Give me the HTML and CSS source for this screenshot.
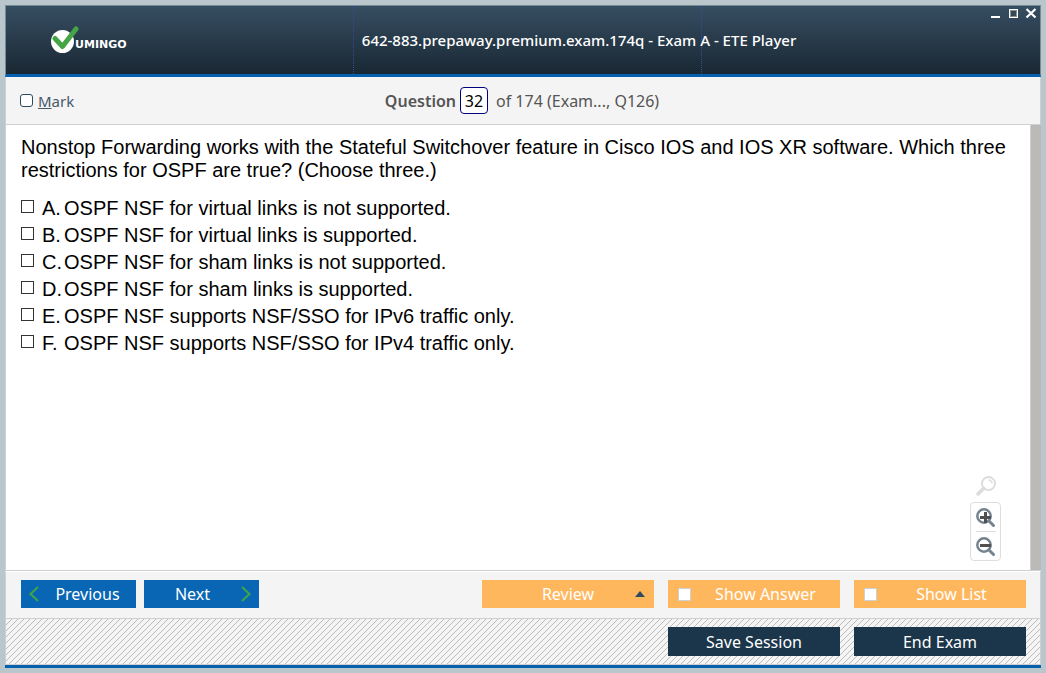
FILE: index.html
```html
<!DOCTYPE html>
<html lang="en">
<head>
<meta charset="utf-8">
<meta name="viewport" content="width=device-width, initial-scale=1">
<title>642-883.prepaway.premium.exam.174q - Exam A - ETE Player</title>
<link rel="stylesheet" href="styles.css">
</head>
<body>
<div class="window">
  <header class="titlebar">
    <div class="brand">
      <svg class="brand-mark" width="28" height="28" viewBox="0 0 28 28" aria-hidden="true">
        <circle cx="11.5" cy="15.5" r="11.5" fill="#fff"/>
        <path d="M4 12.500 L11.500 20.500 L25 3" fill="none" stroke="#45a445" stroke-width="5" stroke-linecap="round" stroke-linejoin="round"/>
      </svg>
      <span class="brand-name">UMINGO</span>
    </div>
    <h1 class="title">642-883.prepaway.premium.exam.174q - Exam A - ETE Player</h1>
    <div class="window-controls">
      <button class="window-button" type="button" aria-label="Minimize"><svg width="12" height="12" viewBox="0 0 12 12"><path d="M2 9h9v2H2z" fill="#fff"/></svg></button>
      <button class="window-button" type="button" aria-label="Maximize"><svg width="12" height="12" viewBox="0 0 12 12"><rect x="2.500" y="2.500" width="8" height="8" fill="none" stroke="#fff"/><rect x="3.500" y="3.500" width="6" height="6" fill="none" stroke="#8f8f88"/></svg></button>
      <button class="window-button" type="button" aria-label="Close"><svg width="12" height="12" viewBox="0 0 12 12"><path d="M1.500 2 L10.500 10.500 M10.500 2 L1.500 10.500" stroke="#fff" stroke-width="2.200"/></svg></button>
    </div>
  </header>

  <div class="question-bar">
    <label class="mark"><input class="mark-box" type="checkbox"><span><u>M</u>ark</span></label>
    <div class="position">
      <label class="position-label" for="question-number">Question</label>
      <input class="position-input" id="question-number" type="text" value="32">
      <span class="position-total">of 174 (Exam..., Q126)</span>
    </div>
  </div>

  <main class="content">
    <div class="question">
      <p class="question-text">Nonstop Forwarding works with the Stateful Switchover feature in Cisco IOS and IOS XR software. Which three restrictions for OSPF are true? (Choose three.)</p>
      <div class="answers">
        <label class="answer"><input class="answer-box" type="checkbox"><span class="letter">A.</span><span>OSPF NSF for virtual links is not supported.</span></label>
        <label class="answer"><input class="answer-box" type="checkbox"><span class="letter">B.</span><span>OSPF NSF for virtual links is supported.</span></label>
        <label class="answer"><input class="answer-box" type="checkbox"><span class="letter">C.</span><span>OSPF NSF for sham links is not supported.</span></label>
        <label class="answer"><input class="answer-box" type="checkbox"><span class="letter">D.</span><span>OSPF NSF for sham links is supported.</span></label>
        <label class="answer"><input class="answer-box" type="checkbox"><span class="letter">E.</span><span>OSPF NSF supports NSF/SSO for IPv6 traffic only.</span></label>
        <label class="answer"><input class="answer-box" type="checkbox"><span class="letter">F.</span><span>OSPF NSF supports NSF/SSO for IPv4 traffic only.</span></label>
      </div>
    </div>
    <div class="zoom">
      <svg width="20" height="20" viewBox="0 0 20 20" fill="none" aria-hidden="true"><circle cx="12.500" cy="7.500" r="6.500" stroke="#dcdcdc" stroke-width="2"/><path d="M12.500 4a3.500 3.500 0 0 1 3.500 3.500" stroke="#dcdcdc" stroke-width="1.500"/><path d="M7.500 12.500 L2 18" stroke="#dcdcdc" stroke-width="3.500" stroke-linecap="round"/></svg>
      <div class="zoom-panel">
        <button class="zoom-button" type="button" aria-label="Zoom in"><svg width="20" height="20" viewBox="0 0 20 20" fill="none"><circle cx="8" cy="8" r="6.700" stroke="#75838f" stroke-width="2.500"/><path d="M13 13 L17.500 17.500" stroke="#75838f" stroke-width="3" stroke-linecap="round"/><path d="M4 9.500h11M9.500 4v11" stroke="#505050" stroke-width="3"/></svg></button>
        <button class="zoom-button" type="button" aria-label="Zoom out"><svg width="20" height="20" viewBox="0 0 20 20" fill="none"><circle cx="8" cy="8" r="6.700" stroke="#75838f" stroke-width="2.500"/><path d="M13 13 L17.500 17.500" stroke="#75838f" stroke-width="3" stroke-linecap="round"/><path d="M4 8.500h11" stroke="#505050" stroke-width="3"/></svg></button>
      </div>
    </div>
    <div class="scroll-track"></div>
  </main>

  <div class="actions">
    <button class="button nav" type="button"><svg width="10" height="16" viewBox="0 0 10 16"><path d="M9 1 L1.500 8 L9 15" fill="none" stroke="#3fa34a" stroke-width="2.200"/></svg><span class="grow">Previous</span></button>
    <button class="button nav" type="button"><span class="grow">Next</span><svg width="10" height="16" viewBox="0 0 10 16"><path d="M1 1 L8.500 8 L1 15" fill="none" stroke="#3fa34a" stroke-width="2.200"/></svg></button>
    <span class="spacer"></span>
    <button class="button option review" type="button"><span class="grow">Review</span><svg class="caret" width="10" height="6" viewBox="0 0 10 6"><path d="M0 6 L5 0 L10 6z" fill="#2f4a5f"/></svg></button>
    <label class="button option"><input class="option-box" type="checkbox"><span class="grow">Show Answer</span></label>
    <label class="button option"><input class="option-box" type="checkbox"><span class="grow">Show List</span></label>
  </div>

  <footer class="session">
    <button class="button dark" type="button">Save Session</button>
    <button class="button dark" type="button">End Exam</button>
  </footer>
</div>
</body>
</html>
```
FILE: styles.css
```css
* { box-sizing: border-box; }

body {
  margin: 0;
  padding: 5px;
  min-height: 100vh;
  display: flex;
  background: #b9c6cc;
  font-family: "Noto Sans", "Open Sans", sans-serif;
}

button, input { font: inherit; margin: 0; padding: 0; }
input[type="checkbox"] { appearance: none; flex: none; background: #fff; }
svg { display: block; flex: none; }

.window {
  flex: 1;
  min-width: 0;
  display: flex;
  flex-direction: column;
  background: #fff;
  border-bottom: 3px solid #0560b0;
}

.titlebar {
  display: grid;
  grid-template-columns: 37fr minmax(0, 37fr) 36fr;
  height: 72px;
  border: 1px solid #788b93;
  border-bottom: 3px solid #0560b0;
  background: linear-gradient(#364e62, #1a2733);
  color: #fff;
}

.brand {
  display: flex;
  align-items: center;
  padding-left: 45px;
  border-right: 1px dotted #34499a;
}
.brand-name {
  margin-left: -4px;
  padding-top: 10px;
  font: bold 11px/12px "DejaVu Sans", sans-serif;
}

.title {
  margin: 0;
  padding-left: 8px;
  border-right: 1px dotted #34499a;
  font-size: 15px;
  font-weight: 500;
  line-height: 68px;
  white-space: nowrap;
}

.window-controls {
  display: flex;
  align-self: start;
  justify-content: flex-end;
  gap: 6px;
  padding: 1px 3px 0 0;
}
.window-button { border: 0; background: none; }

.question-bar {
  display: grid;
  grid-template-columns: 1fr auto 1fr;
  align-items: center;
  height: 48px;
  padding: 0 16px 0 14px;
  border: 1px solid #cfcfcf;
  border-top: 0;
  background: #f4f4f4;
  color: #555;
  font-size: 16px;
}
.mark { display: flex; align-items: center; gap: 5px; color: #44596a; font-size: 15px; }
.mark-box { width: 13px; height: 13px; border: 1px solid #2f4a5f; border-radius: 3px; }
.position { display: flex; align-items: center; gap: 4px; }
.position-label { font-weight: 600; }
.position-input {
  width: 28px;
  height: 27px;
  border: 1px solid #000080;
  border-radius: 4px;
  background: #fff;
  color: #000;
  text-align: center;
}
.position-total { padding-left: 4px; }

.content {
  flex: 1;
  display: flex;
  border-bottom: 1px solid #cfcfcf;
  border-left: 1px solid #cfcfcf;
  position: relative;
  color: #000;
  font: 20px/23px "Liberation Sans", Arial, sans-serif;
}
.question { flex: 1; padding: 11px 20px 20px 15px; }
.question-text { margin: 0; }
.answers { margin-top: 13px; }
.answer { display: flex; align-items: center; height: 27px; }
.answer-box { width: 13px; height: 13px; margin-bottom: 4px; border: 1px solid #333; }
.letter { flex: none; width: 22px; margin-left: 8px; }

.zoom {
  position: absolute;
  right: 40px;
  bottom: 9px;
  display: flex;
  flex-direction: column;
  align-items: center;
  gap: 6px;
}
.zoom-panel {
  padding: 0 4px 0 5px;
  border: 1px solid #dedede;
  border-radius: 4px;
  background: #fff;
}
.zoom-button { display: block; padding: 5px 0 3px; border: 0; background: none; }
.zoom-button + .zoom-button { border-top: 1px solid #dedede; }
.scroll-track { width: 11px; border-left: 1px solid #cfcfcf; background: #bcbab6; }

.actions {
  display: flex;
  align-items: center;
  gap: 8px;
  height: 48px;
  padding: 0 14px 2px 15px;
  border: 1px solid #cfcfcf;
  border-top: 1px solid #fff;
  background: #f4f4f4;
}
.spacer { flex: 1; }
.button {
  display: flex;
  align-items: center;
  justify-content: center;
  height: 28px;
  border: 0;
  color: #fff;
  font: 16px/20px "Noto Sans", "Open Sans", sans-serif;
}
.grow { flex: 1; text-align: center; }
.nav { gap: 8px; width: 115px; padding: 0 8px; background: #0866b5; }
.option { gap: 10px; width: 172px; padding: 0 10px; background: #ffb75e; }
.review { padding: 0 9px 0 29px; }
.option + .option { margin-left: 6px; }
.option-box { width: 13px; height: 13px; border: 1px solid #d0d0d0; }

.session {
  display: flex;
  justify-content: flex-end;
  align-items: center;
  gap: 14px;
  height: 46px;
  padding: 0 14px;
  border: 1px solid #cfcfcf;
  border-top: 0;
  background: linear-gradient(135deg, #f4f4f4 46%, #bcbcbc 46% 54%, #f4f4f4 54%) 0 0 / 6px 6px;
}
.dark { width: 172px; height: 29px; background: #1b354a; }
```
